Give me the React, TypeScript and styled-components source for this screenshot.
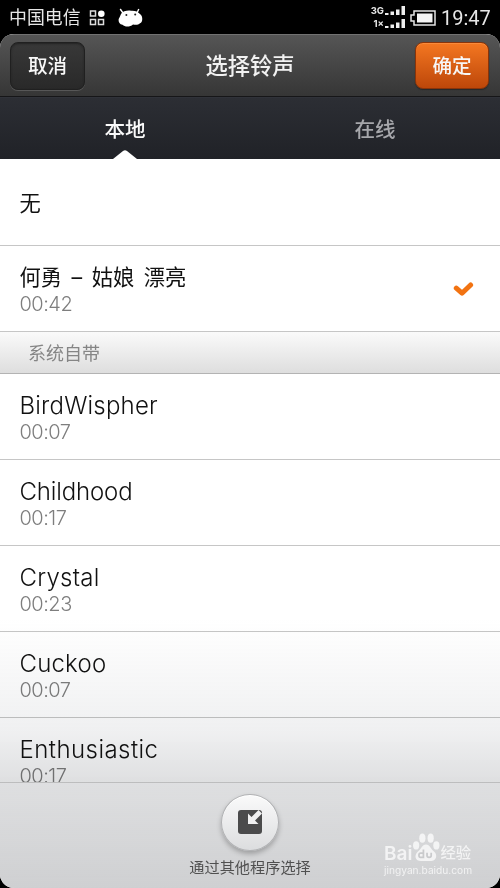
import React from "react";
import styled, { createGlobalStyle } from "styled-components";

const GlobalStyle = createGlobalStyle`
  * { box-sizing: border-box; }
  body { margin: 0; background: #000; }
`;

const Phone = styled.div`
  width: 500px;
  height: 888px;
  display: flex;
  flex-direction: column;
  overflow: hidden;
  background: #000;
  font-family: Inter, "Noto Sans CJK SC", sans-serif;
`;

const StatusBar = styled.div`
  height: 34px;
  flex: none;
  display: flex;
  align-items: center;
  padding: 1px 8px 0 9px;
  color: #e6e6e6;
`;

const Carrier = styled.span`
  font-size: 17.9px;
  line-height: 34px;
  width: 80px;
  white-space: nowrap;
`;

const MascotIcon = styled.svg`
  margin-left: 12px;
`;

const StatusRight = styled.div`
  margin-left: auto;
  display: flex;
  align-items: center;
  gap: 5px;
`;

const Signals = styled.div`
  display: flex;
  flex-direction: column;
  gap: 1px;
`;

const SignalRow = styled.div`
  height: 12px;
  display: flex;
  align-items: center;
  justify-content: flex-end;
  gap: 1px;
`;

const NetLabel = styled.span`
  font-size: 9.5px;
  line-height: 12px;
  font-weight: 700;
`;

const Clock = styled.span`
  font-family: Roboto, sans-serif;
  font-size: 20px;
  line-height: 34px;
  width: 51px;
  white-space: nowrap;
`;

const Window = styled.main`
  position: relative;
  height: 854px;
  display: flex;
  flex-direction: column;
  overflow: hidden;
  border-radius: 14px;
  background: #fff;
`;

const Header = styled.header`
  height: 63px;
  flex: none;
  display: flex;
  align-items: center;
  justify-content: space-between;
  padding: 0 11px 0 10px;
  background: linear-gradient(#555, #363636);
  border-top: 1px solid #727272;
  border-bottom: 1px solid #161618;
`;

const Title = styled.h1`
  margin: 0;
  color: #f2f2f2;
  font-size: 22.3px;
  line-height: 30px;
  font-weight: 500;
`;

const HeaderButton = styled.button<{ $primary?: boolean }>`
  width: ${(p) => (p.$primary ? 74 : 75)}px;
  height: ${(p) => (p.$primary ? 47 : 48)}px;
  padding: 0;
  border-radius: 8px;
  border: 1px solid ${(p) => (p.$primary ? "#8a3409" : "#202020")};
  background: ${(p) => (p.$primary ? "linear-gradient(#f47721, #bd470a)" : "linear-gradient(#383838, #292929)")};
  box-shadow: ${(p) => (p.$primary ? "inset 0 1px #f98a3a, 0 1px 1px #282828" : "0 1px #575757, inset 0 1px 2px #222")};
  color: #f7f7f7;
  font-family: inherit;
  font-size: 19.6px;
  font-weight: 500;
  line-height: 44px;
`;

const Tabs = styled.nav`
  height: 62px;
  flex: none;
  display: grid;
  grid-template-columns: 1fr 1fr;
  background: linear-gradient(#2c2e34, #202227);
  border-top: 1px solid #303239;
`;

const Tab = styled.div<{ $active?: boolean }>`
  position: relative;
  height: 61px;
  text-align: center;
  font-size: 20.6px;
  line-height: 63px;
  font-weight: 500;
  color: ${(p) => (p.$active ? "#fafafa" : "#a6a7ab")};
`;

const TabPointer = styled.svg`
  position: absolute;
  left: 113px;
  bottom: 0;
`;

const List = styled.div`
  height: 623px;
  flex: none;
  overflow: hidden;
  padding-top: 1px;
`;

const Row = styled.div`
  height: 86px;
  display: flex;
  align-items: center;
  justify-content: space-between;
  padding: 1px 26px 0 19.5px;
  border-bottom: 1px solid #c6c6c6;
`;

const Name = styled.div`
  font-size: 21.3px;
  font-weight: 400;
  word-spacing: 3.5px;
  line-height: 30px;
  color: #111;
  white-space: nowrap;
`;

const ToneName = styled(Name)<{ $spacing: number }>`
  padding-top: 1px;
  font-size: 24px;
  font-weight: 300;
  line-height: 29px;
  word-spacing: 0;
  letter-spacing: ${(p) => p.$spacing}px;
`;

const Duration = styled.div`
  font-size: 20px;
  font-weight: 300;
  line-height: 24px;
  letter-spacing: -0.5px;
  color: #7e7e7e;
`;

const Section = styled.div`
  height: 42px;
  padding-left: 28px;
  font-size: 18px;
  line-height: 43px;
  color: #858585;
  background: linear-gradient(#fafafa, #dedede);
  border-bottom: 1px solid #b3b3b3;
`;

const BottomShade = styled.div`
  position: absolute;
  left: 0;
  right: 0;
  bottom: 0;
  height: 268px;
  pointer-events: none;
  background: linear-gradient(rgba(226, 227, 229, 0), rgba(226, 227, 229, 0.55) 42%, rgba(212, 213, 215, 0.75) 60%, rgba(204, 205, 207, 0.95));
  mix-blend-mode: multiply;
`;

const Footer = styled.footer`
  height: 107px;
  flex: none;
  display: flex;
  flex-direction: column;
  align-items: center;
  padding-top: 11px;
  border-top: 1px solid #d8d8d8;
  background: #fff;
`;

const RoundButton = styled.button`
  position: relative;
  z-index: 1;
  width: 58px;
  height: 57px;
  padding: 0 0 2px;
  flex: none;
  display: grid;
  place-items: center;
  border: 1px solid #b1b2b4;
  border-radius: 50%;
  background: linear-gradient(#fafafa, #dcdddf);
  box-shadow: 0 3px 5px rgba(0, 0, 0, 0.25), inset 0 1px #fff;
`;

const FooterLabel = styled.div`
  position: relative;
  z-index: 1;
  margin-top: 5px;
  font-size: 15.2px;
  line-height: 24px;
  color: #505050;
`;

const Watermark = styled.div`
  position: absolute;
  z-index: 2;
  left: 384px;
  bottom: 11px;
  width: 92px;
  color: rgba(255, 255, 255, 0.72);
`;

const Brand = styled.div`
  height: 31px;
  display: flex;
  align-items: flex-end;
  font-size: 19px;
  font-weight: 600;
  line-height: 19px;
`;

const PawIcon = styled.svg`
  margin-bottom: 1px;
`;

const BrandSuffix = styled.span`
  font-size: 15.3px;
  font-weight: 500;
  line-height: 20px;
`;

const Site = styled.div`
  margin-top: 1px;
  font-size: 10.2px;
  line-height: 13px;
  white-space: nowrap;
`;

const Bars = () => (
  <svg width="20" height="10" viewBox="0 0 20 10" fill="#eee">
    <path d="M0 7h3.5v2H0zM5.5 5.5H9V9H5.5zM11 3.5h3.5V9H11zM16.5 0H20v9h-3.5z" />
  </svg>
);

const tones = [
  { name: "BirdWispher", time: "00:07", spacing: 0.2 },
  { name: "Childhood", time: "00:17", spacing: -0.15 },
  { name: "Crystal", time: "00:23", spacing: 0.25 },
  { name: "Cuckoo", time: "00:07", spacing: 0.2 },
  { name: "Enthusiastic", time: "00:17", spacing: 0.45 },
];

export default function App() {
  return (
    <>
      <GlobalStyle />
      <Phone>
        <StatusBar>
          <Carrier>中国电信</Carrier>
          <svg width="17" height="16" viewBox="0 0 17 16" fill="none" stroke="#ddd" strokeWidth="1.5">
            <path d="M1.5 1h5v5h-5zM1.5 9.5h5v5h-5zM9.5 9.5h5v5h-5z" />
            <circle cx="12.3" cy="3.8" r="3.3" fill="#fff" stroke="none" />
          </svg>
          <MascotIcon width="26" height="19" viewBox="0 0 26 19">
            <path d="M2.2 1 5 5M20.8 1 19 5" stroke="#fff" strokeWidth="1.4" />
            <path d="M3 6C5 3 9 2.2 13 2.7c4-.3 7 .8 9 3.3 3 2 3 8 0 9.2-2 2-5 1.5-7 1.2-3 2.8-8 2.8-10.5.4C0 16 0 11 1.5 9.5Z" fill="#fff" />
            <circle cx="8.4" cy="7" r="1" fill="#222" />
            <circle cx="17.2" cy="6.4" r="1" fill="#222" />
          </MascotIcon>
          <StatusRight>
            <Signals>
              <SignalRow><NetLabel>3G</NetLabel><Bars /></SignalRow>
              <SignalRow><NetLabel>1×</NetLabel><Bars /></SignalRow>
            </Signals>
            <svg width="26" height="16" viewBox="0 0 26 16">
              <path d="M4 1h21v14H4v-4H1V5h3z" fill="none" stroke="#e5e5e5" strokeWidth="1.5" />
              <path d="M7 3.5h15.5v9H7z" fill="#f5f5f5" />
            </svg>
            <Clock>19:47</Clock>
          </StatusRight>
        </StatusBar>
        <Window>
          <Header>
            <HeaderButton>取消</HeaderButton>
            <Title>选择铃声</Title>
            <HeaderButton $primary>确定</HeaderButton>
          </Header>
          <Tabs>
            <Tab $active>
              本地
              <TabPointer width="24" height="9" viewBox="0 0 24 9">
                <path d="M0 9 10 1q2-1.5 4 0l10 8z" fill="#fff" />
              </TabPointer>
            </Tab>
            <Tab>在线</Tab>
          </Tabs>
          <List>
            <Row><Name>无</Name></Row>
            <Row>
              <div>
                <Name>何勇 – 姑娘 漂亮</Name>
                <Duration>00:42</Duration>
              </div>
              <svg width="21" height="16" viewBox="0 0 21 16">
                <path d="m3.3 7.2 5.7 5L17.6 4" fill="none" stroke="#f27312" strokeWidth="5" strokeLinecap="round" strokeLinejoin="round" />
              </svg>
            </Row>
            <Section>系统自带</Section>
            {tones.map((tone) => (
              <Row key={tone.name}>
                <div>
                  <ToneName $spacing={tone.spacing}>{tone.name}</ToneName>
                  <Duration>{tone.time}</Duration>
                </div>
              </Row>
            ))}
          </List>
          <Footer>
            <RoundButton>
              <svg width="24" height="24" viewBox="0 0 24 24">
                <rect width="24" height="24" rx="3" fill="#4b4b4c" />
                <path d="m20.5 0 3.5 3.5-7 7 3.5 3.5H10V3.5L13.5 7z" fill="#f0f0f1" />
              </svg>
            </RoundButton>
            <FooterLabel>通过其他程序选择</FooterLabel>
          </Footer>
          <BottomShade />
          <Watermark>
            <Brand>
              Bai
              <PawIcon width="28" height="29" viewBox="0 0 27 28" fill="currentColor">
                <ellipse cx="4" cy="12" rx="3" ry="4" />
                <ellipse cx="10" cy="5" rx="3" ry="4.5" />
                <ellipse cx="18" cy="5" rx="3" ry="4.5" />
                <ellipse cx="23.5" cy="12" rx="3" ry="4" />
                <path d="M13.5 11c4 0 4 4 8 7 4 4 1 9-3 9h-10c-5 0-7-5-3-9 4-3 4-7 8-7Z" />
                <path d="M11 16v7.5H8.2c-2 0-2-4 0-4H11M14.5 19v3c0 2 4 2 4 0v-3" stroke="#c9cacc" strokeWidth="1.7" fill="none" />
              </PawIcon>
              <BrandSuffix>经验</BrandSuffix>
            </Brand>
            <Site>jingyan.baidu.com</Site>
          </Watermark>
        </Window>
      </Phone>
    </>
  );
}
